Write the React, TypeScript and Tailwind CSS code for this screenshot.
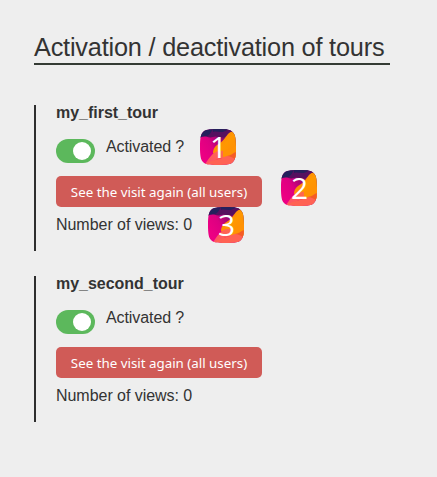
import React, { useId, useState } from 'react';

function Badge({ value, className }: { value: number; className: string }) {
  const id = useId();
  const shape = 'M18 0C27 0 30.5 .8 32.5 3C35.2 5.2 36 9 36 18S35.2 30.8 33 33C31 35.2 27 36 18 36S5 35.2 3 33C.8 30.8 0 27 0 18S.8 5.2 3 3C5 .8 9 0 18 0Z';
  return (
    <span className={`absolute flex size-9 items-center justify-center ${className}`}>
      <svg viewBox="0 0 36 36" className="absolute inset-0 size-full">
        <defs>
          <clipPath id={`${id}-clip`}><path d={shape} /></clipPath>
          <linearGradient id={`${id}-pink`} x1="0" y1=".6" x2="1" y2="0">
            <stop offset="0" stopColor="#ed0083" />
            <stop offset=".3" stopColor="#dc0081" />
            <stop offset=".62" stopColor="#850b6e" />
            <stop offset="1" stopColor="#4a1262" />
          </linearGradient>
          <linearGradient id={`${id}-orange`} x1="0" y1="0" x2="1" y2="1">
            <stop offset="0" stopColor="#ff7416" />
            <stop offset=".5" stopColor="#ff9800" />
            <stop offset="1" stopColor="#ff8a08" />
          </linearGradient>
          <linearGradient id={`${id}-coral`} x1="0" y1="1" x2="1" y2="0">
            <stop offset="0" stopColor="#ff4b70" />
            <stop offset="1" stopColor="#ff7a38" />
          </linearGradient>
        </defs>
        <g clipPath={`url(#${id}-clip)`}>
          <rect width="36" height="36" fill={`url(#${id}-pink)`} />
          <path d="M12 0H36V5C30 3 28 6 25 8C21 10 17 6 13 8C10 9 7 8 5 7Z" fill="#56105f" />
          <path d="M0 0H13C11 3 10 6 7 7C4 8 2 7 0 9Z" fill="#24205c" />
          <path d="M13 0H29C26 1 25 3 21 3C18 3 16 2 13 3Z" fill="#24205c" />
          <path d="M36 3C30 1 28 5 25 9C23 12 20 14 17 16C14 18 13 21 13 24L20 29L36 29Z" fill={`url(#${id}-orange)`} />
          <path d="M4 36C7 33 8 30 11 27C14 23 18 21 23 22C26 23 29 21 32 20L36 18V28C29 24 26 27 23 29C18 30 13 31 11 36Z" fill={`url(#${id}-coral)`} />
          <path d="M23 22C29 22 30 18 36 17V30C31 25 27 26 23 29Z" fill="#ff9204" />
          <path d="M6 36C10 31 16 31 22 29C28 26 31 27 36 29V36Z" fill="#ff6254" />
          <path d="M27 27C30 27 33 24 36 23V31C32 28 30 27 27 27Z" fill="#f45b26" />
        </g>
      </svg>
      <span className="relative left-[0.5px] font-['Open_Sans','Noto_Sans',sans-serif] text-[30px] leading-9 text-white">{value}</span>
    </span>
  );
}

function Toggle() {
  const [on, setOn] = useState(true);
  return (
    <button
      type="button"
      role="switch"
      aria-checked={on}
      aria-label="Activated"
      onClick={() => setOn(!on)}
      className={`mt-[5px] flex h-6 w-[39px] items-center rounded-full px-1 ${on ? 'justify-end bg-[#5cb85c]' : 'justify-start bg-[#bbb]'}`}
    >
      <span className="size-[18px] rounded-full bg-white" />
    </button>
  );
}

function Tour({ name, badges = false }: { name: string; badges?: boolean }) {
  return (
    <section className="relative h-[146px] border-l-2 border-[#2e2e2e] pl-5">
      <h2 className="h-[29px] text-base leading-4 font-bold tracking-[-0.02px]">{name}</h2>
      <div className="flex h-[42px] gap-[11px]">
        <Toggle />
        <span className="pt-0.5 leading-[22px] tracking-[-0.09px]">Activated ?</span>
      </div>
      <button type="button" className="block h-[31px] w-[206px] rounded-[5px] bg-[#d05b57] pt-px text-center font-['Noto_Sans',sans-serif] text-[13.33px] leading-[31px] whitespace-nowrap text-white">
        See the visit again (all users)
      </button>
      <p className="pt-[7px] leading-[22px] tracking-[-0.04px]">Number of views: 0</p>
      {badges && (
        <>
          <Badge value={1} className="top-6 left-[164px]" />
          <Badge value={2} className="top-[65px] left-[245px]" />
          <Badge value={3} className="top-[102px] left-[172px]" />
        </>
      )}
    </section>
  );
}

export default function App() {
  return (
    <main className="h-[477px] w-[437px] bg-[#eeeeee] pt-8 pl-[34px] font-['Liberation_Sans',Arial,sans-serif] text-base text-[#333]">
      <h1 className="h-[33px] w-[356px] border-b-2 border-[#343b34] text-[25.3px] leading-[31px] tracking-[-0.2px] whitespace-nowrap">Activation / deactivation of tours</h1>
      <div className="mt-10 flex flex-col gap-[25px]">
        <Tour name="my_first_tour" badges />
        <Tour name="my_second_tour" />
      </div>
    </main>
  );
}
